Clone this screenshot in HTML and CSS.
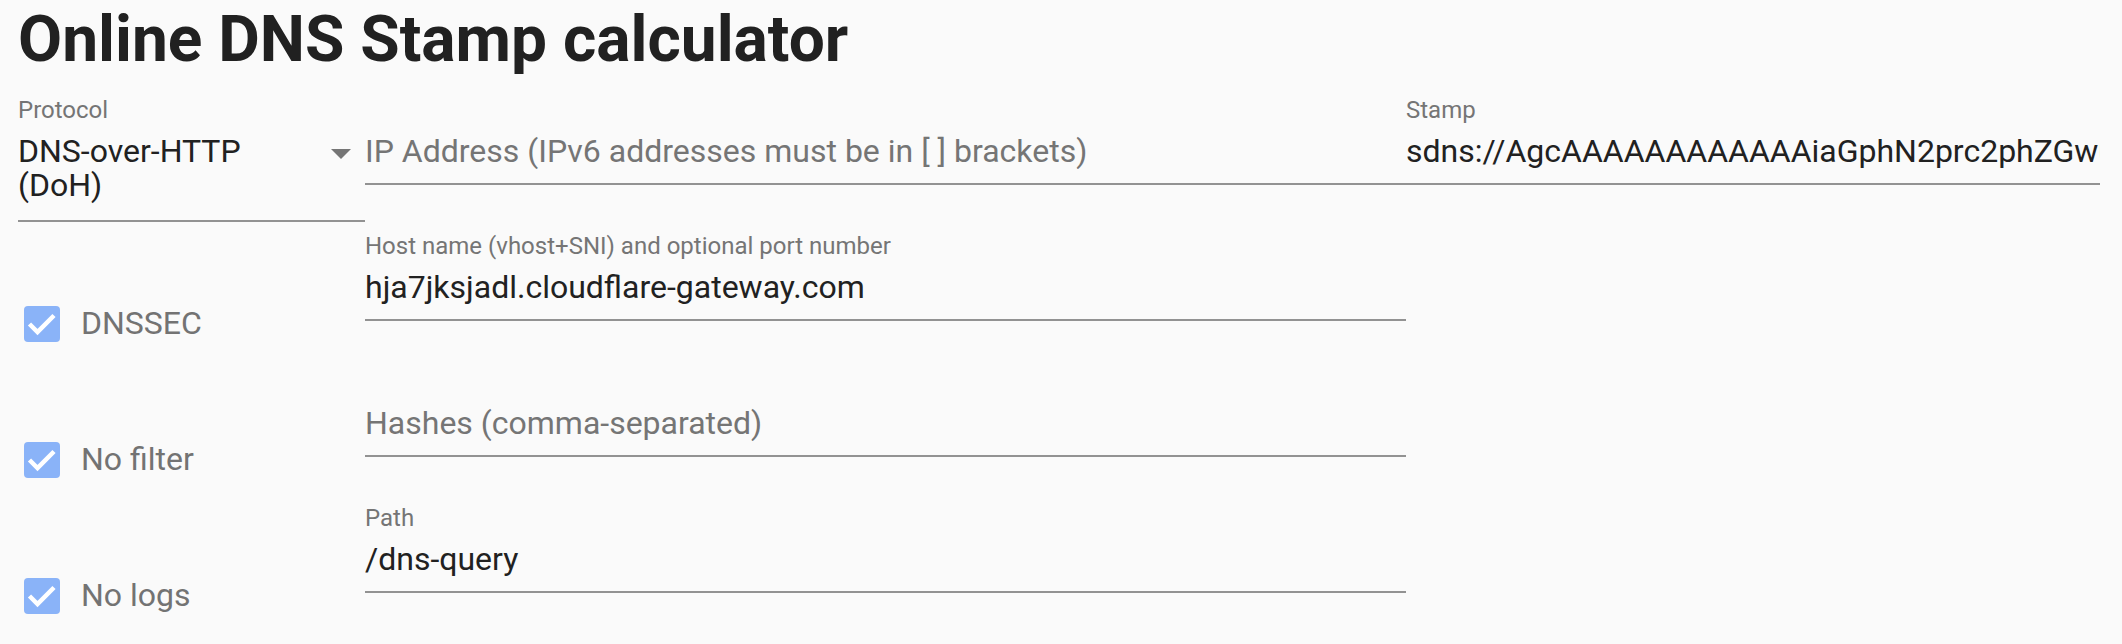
FILE: index.html
```html
<!DOCTYPE html>
<html lang="en">
<head>
  <meta charset="UTF-8">
  <title>Online DNS Stamp calculator</title>
  <link rel="stylesheet" href="styles.css">
</head>
<body>

  <h1>Online DNS Stamp calculator</h1>

  <div class="form">
    <div class="col">
      <div class="field select">
        <label>Protocol</label>
        <div class="select-value">
          <span>DNS-over-HTTP (DoH)</span>
          <svg class="arrow" width="20" height="10" viewBox="0 0 20 10"><path d="M0 0 L20 0 L10 10 Z" fill="#757575"/></svg>
        </div>
      </div>
      <div class="checks">
        <div class="check">
          <span class="box"><svg width="36" height="36" viewBox="0 0 36 36"><polyline points="5.5,18 13.5,26 30,9.5" fill="none" stroke="#fff" stroke-width="4.5"/></svg></span>
          <span class="check-label">DNSSEC</span>
        </div>
        <div class="check">
          <span class="box"><svg width="36" height="36" viewBox="0 0 36 36"><polyline points="5.5,18 13.5,26 30,9.5" fill="none" stroke="#fff" stroke-width="4.5"/></svg></span>
          <span class="check-label">No filter</span>
        </div>
        <div class="check">
          <span class="box"><svg width="36" height="36" viewBox="0 0 36 36"><polyline points="5.5,18 13.5,26 30,9.5" fill="none" stroke="#fff" stroke-width="4.5"/></svg></span>
          <span class="check-label">No logs</span>
        </div>
      </div>
    </div>

    <div class="col">
      <div class="field">
        <label></label>
        <input type="text" placeholder="IP Address (IPv6 addresses must be in [ ] brackets)">
      </div>
      <div class="field">
        <label>Host name (vhost+SNI) and optional port number</label>
        <input type="text" value="hja7jksjadl.cloudflare-gateway.com">
      </div>
      <div class="field">
        <label></label>
        <input type="text" placeholder="Hashes (comma-separated)">
      </div>
      <div class="field">
        <label>Path</label>
        <input type="text" value="/dns-query">
      </div>
    </div>

    <div class="col">
      <div class="field">
        <label>Stamp</label>
        <input type="text" value="sdns://AgcAAAAAAAAAAAAiaGphN2prc2phZGwuY2xvdWRmbGFyZS1nYXRld2F5LmNvbQovZG5zLXF1ZXJ5">
      </div>
    </div>
  </div>

</body>
</html>
```

FILE: styles.css
```css
body {
  font-family: Roboto, "Liberation Sans", sans-serif;
  background-color: #fafafa;
  color: #212121;
  margin: 0;
  padding: 0 22px 0 18px;
}

h1 {
  font-size: 64px;
  font-weight: bold;
  line-height: 64px;
  margin: 8px 0 0;
}

.form {
  display: grid;
  grid-template-columns: 1fr 3fr 2fr;
  align-items: start;
}

.col {
  display: flex;
  flex-direction: column;
  gap: 23px;
}

.field {
  padding: 26px 0 14px;
  border-bottom: 2px solid #929292;
}

.field label {
  display: block;
  height: 24px;
  font-size: 24px;
  line-height: 24px;
  color: #757575;
  margin-bottom: 11px;
}

.field input {
  display: block;
  width: 100%;
  height: 36px;
  padding: 0;
  border: none;
  outline: none;
  background: transparent;
  font-family: Roboto, "Liberation Sans", sans-serif;
  font-size: 32px;
  color: #212121;
}

.field input::placeholder {
  color: #757575;
}

.select {
  padding-bottom: 18px;
}

.select label {
  margin-bottom: 12px;
}

.select-value {
  display: flex;
  justify-content: space-between;
  align-items: flex-start;
  font-size: 32px;
  line-height: 34px;
}

.arrow {
  flex-shrink: 0;
  margin: 15px 14px 0 0;
}

.checks {
  display: flex;
  flex-direction: column;
  gap: 100px;
  margin-top: 61px;
  padding-left: 6px;
}

.check {
  display: flex;
  align-items: center;
  gap: 21px;
  height: 36px;
}

.box {
  width: 36px;
  height: 36px;
  border-radius: 4px;
  background-color: #8ab3f8;
}

.box svg {
  display: block;
}

.check-label {
  font-size: 32px;
  color: #737373;
  padding-bottom: 3px;
}
```
